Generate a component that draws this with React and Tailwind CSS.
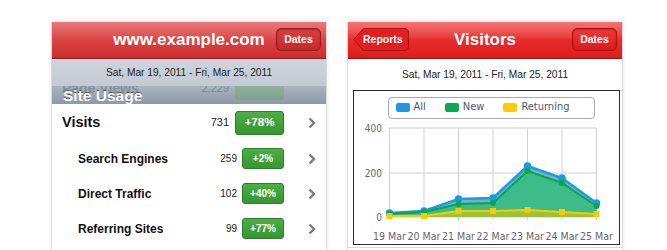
import React from 'react';

const helv = { fontFamily: '"Liberation Sans", Arial, sans-serif' };

const Chevron = () => (
  <svg width="8" height="12" viewBox="0 0 8 12" className="shrink-0">
    <path d="M1.5 1.5 L6 6 L1.5 10.5" fill="none" stroke="#7b7b7b" strokeWidth="2.4" />
  </svg>
);

const Badge = ({ value, big }) => (
  <div
    className={`flex items-center justify-center rounded-[3px] border border-[#2d7d2a] bg-gradient-to-b from-[#4cae45] to-[#36962f] font-bold text-white ${
      big ? 'h-[24px] w-[49px] text-[11.5px]' : 'h-[21px] w-[42px] text-[10px]'
    }`}
  >
    {value}
  </div>
);

const DatesButton = ({ tone }) => (
  <div
    className={`absolute right-[5px] top-[6px] flex h-[23px] w-[45px] items-center justify-center rounded-[5px] border text-[10.5px] font-bold text-white shadow-[inset_0_1px_2px_rgba(0,0,0,0.25)] ${
      tone === 'dark'
        ? 'border-[#951c1c] bg-gradient-to-b from-[#d84040] to-[#c92828]'
        : 'border-[#a81212] bg-gradient-to-b from-[#ec3a3a] to-[#dc1818]'
    }`}
  >
    Dates
  </div>
);

const SiteUsage = () => {
  const rows = [
    { name: 'Search Engines', count: '259', pct: '+2%' },
    { name: 'Direct Traffic', count: '102', pct: '+40%' },
    { name: 'Referring Sites', count: '99', pct: '+77%' },
  ];

  return (
    <div className="flex h-[230px] w-[276px] flex-col border-x border-[#d9d9d9] bg-white shadow-[0_-2px_6px_rgba(0,0,0,0.08)]" style={helv}>
      {/* title bar */}
      <div className="relative flex h-[37px] items-center justify-center border-b border-[#8e1c1c] bg-gradient-to-b from-[#e87a7a] via-[#d94444] to-[#cd2b2b]">
        <span className="text-[17px] font-bold text-white">www.example.com</span>
        <DatesButton tone="dark" />
      </div>

      {/* date bar */}
      <div className="flex h-[27px] items-center justify-center bg-gradient-to-b from-[#cdd4dc] to-[#c3cad3] text-[10.2px] text-[#222]">
        Sat, Mar 19, 2011 - Fri, Mar 25, 2011
      </div>

      {/* section header, with the scrolled row showing through */}
      <div className="relative h-[18px] overflow-hidden bg-gradient-to-b from-[#aab4bf] to-[#8d99a6]">
        <div className="absolute left-[10px] right-[10px] top-[-10px] flex h-[24px] items-center">
          <span className="text-[14px] font-bold text-[#6f7c8a] opacity-60">Page Views</span>
          <span className="ml-auto mr-[6px] text-[11px] text-[#6f7c8a] opacity-70">2,229</span>
          <div className="mr-[32px] h-[24px] w-[49px] rounded-[3px] bg-[#4caa45] opacity-30" />
        </div>
        <span className="absolute left-[11px] top-[-2px] text-[15.5px] font-bold text-white [text-shadow:0_-1px_0_rgba(0,0,0,0.45)]">
          Site Usage
        </span>
      </div>

      {/* rows */}
      <div className="flex h-[37px] items-center pl-[10px] pr-[10px]">
        <span className="text-[14.5px] font-bold text-[#111]">Visits</span>
        <span className="ml-auto mr-[6px] text-[11px] text-[#222]">731</span>
        <Badge value="+78%" big />
        <div className="ml-[24px]">
          <Chevron />
        </div>
      </div>
      {rows.map((r) => (
        <div key={r.name} className="flex h-[35px] items-center pl-[26px] pr-[10px]">
          <span className="text-[12px] font-bold text-[#111]">{r.name}</span>
          <span className="ml-auto mr-[5px] text-[10px] text-[#222]">{r.count}</span>
          <Badge value={r.pct} />
          <div className="ml-[24px]">
            <Chevron />
          </div>
        </div>
      ))}
    </div>
  );
};

const xs = [35.5, 70, 104.5, 139, 173.5, 208, 242.5];
const all = [93, 91, 79, 78, 46, 58, 83];
const fresh = [94, 92, 84, 83, 51, 63, 86];
const ret = [96, 96, 91, 91, 90, 92, 94];
const base = 97;

const line = (ys) => ys.map((y, i) => `${xs[i]},${y}`).join(' ');
const area = (ys) => `${xs[0]},${base} ${line(ys)} ${xs[xs.length - 1]},${base}`;

const chartFont = { fontFamily: '"DejaVu Sans Condensed", "DejaVu Sans", sans-serif', fontStretch: 'condensed' };

const Chart = () => (
  <svg width="264" height="124" className="block" style={chartFont}>
    {[8, 53, 97].map((y) => (
      <line key={y} x1={xs[0]} x2={xs[6]} y1={y} y2={y} stroke="#cfcfcf" strokeWidth="1" />
    ))}
    {xs.map((x) => (
      <line key={x} x1={x} x2={x} y1={8} y2={100} stroke="#d2d2d2" strokeWidth="1" />
    ))}
    <text x="28" y="12" textAnchor="end" fontSize="10" fill="#666">400</text>
    <text x="28" y="57" textAnchor="end" fontSize="10" fill="#666">200</text>
    <text x="28" y="101" textAnchor="end" fontSize="10" fill="#666">0</text>

    <polygon points={area(all)} fill="#6fb3cf" />
    <polygon points={area(fresh)} fill="#3dbb8a" />
    <polygon points={area(ret)} fill="#9cc23a" />

    <polyline points={line(all)} fill="none" stroke="#1b9ae0" strokeWidth="2.5" />
    <polyline points={line(fresh)} fill="none" stroke="#0aa648" strokeWidth="2" />
    <polyline points={line(ret)} fill="none" stroke="#f6cc00" strokeWidth="2" />

    {all.map((y, i) => (
      <circle key={`a${i}`} cx={xs[i]} cy={y} r="3.8" fill="#1b9ae0" />
    ))}
    {fresh.map((y, i) => (
      <circle key={`n${i}`} cx={xs[i]} cy={y} r="3" fill="#0aa648" />
    ))}
    {ret.map((y, i) => (
      <rect key={`r${i}`} x={xs[i] - 3} y={y - 3} width="6" height="6" fill="#f6cc00" />
    ))}

    {xs.map((x, i) => (
      <text key={`l${i}`} x={x} y="120" textAnchor="middle" fontSize="10.5" fill="#666">
        {`${19 + i} Mar`}
      </text>
    ))}
  </svg>
);

const LegendItem = ({ color, label }) => (
  <div className="flex items-center gap-[4px]">
    <div className={`h-[9px] w-[14px] rounded-[2px] ${color}`} />
    <span>{label}</span>
  </div>
);

const Visitors = () => (
  <div className="flex h-[230px] w-[276px] flex-col border-x border-[#d9d9d9] bg-white shadow-[0_-2px_6px_rgba(0,0,0,0.08)]" style={helv}>
    <div className="relative flex h-[37px] items-center justify-center border-b border-[#8e1414] bg-gradient-to-b from-[#f47474] via-[#e72c2c] to-[#df1b1b]">
      <div className="absolute left-[5px] top-[6px] h-[23px] w-[56px]">
        <svg width="56" height="23" viewBox="0 0 56 23" className="absolute inset-0">
          <path
            d="M0.8 11.5 L10 1 Q10.6 0.5 11.5 0.5 L51 0.5 Q55.5 0.5 55.5 5 L55.5 18 Q55.5 22.5 51 22.5 L11.5 22.5 Q10.6 22.5 10 22 Z"
            fill="#e21e1e"
            stroke="#a51414"
            strokeWidth="1"
          />
        </svg>
        <span className="relative flex h-full items-center pl-[10px] text-[10.5px] font-bold text-white">Reports</span>
      </div>
      <span className="text-[17px] font-bold text-white">Visitors</span>
      <DatesButton tone="bright" />
    </div>

    <div className="flex h-[31px] items-center justify-center text-[10.2px] text-[#222]">
      Sat, Mar 19, 2011 - Fri, Mar 25, 2011
    </div>

    <div className="ml-[5px] w-[267px] border-[1.5px] border-[#2a2a2a] pt-[5.5px]">
      <div
        className="ml-[33.5px] flex h-[22px] w-[207px] items-center gap-[19px] rounded-[4px] border border-[#a9a9a9] pl-[7px] text-[11px] text-[#4a5a70]"
        style={chartFont}
      >
        <LegendItem color="bg-[#1e9be0]" label="All" />
        <LegendItem color="bg-[#0aaa4a]" label="New" />
        <LegendItem color="bg-[#ffcc00]" label="Returning" />
      </div>
      <div className="mt-[1px]">
        <Chart />
      </div>
    </div>
    <div className="mt-[2px] h-px bg-[#d8d8d8]" />
  </div>
);

export default function App() {
  return (
    <div className="flex h-[250px] w-[667px] gap-[20px] overflow-hidden bg-white pl-[51px] pt-[22px]">
      <SiteUsage />
      <Visitors />
    </div>
  );
}
